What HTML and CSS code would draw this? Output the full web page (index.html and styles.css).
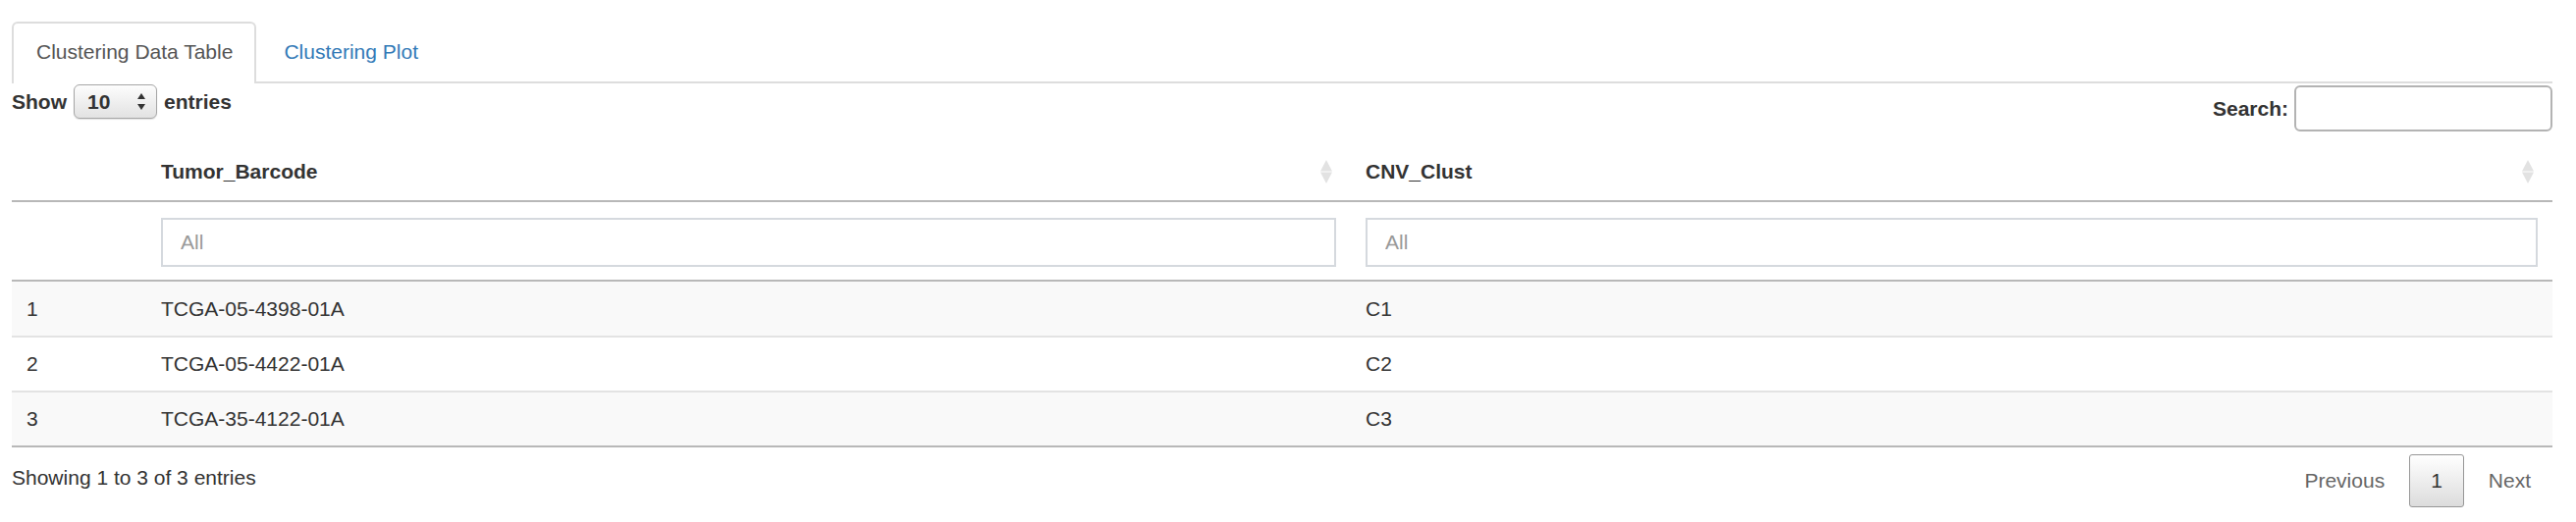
FILE: index.html
```html
<!DOCTYPE html>
<html lang="en">
<head>
<meta charset="utf-8">
<title>Clustering Data Table</title>
<link rel="stylesheet" href="styles.css">
</head>
<body>
<div class="page">
  <ul class="tabs">
    <li class="tab active">Clustering Data Table</li>
    <li class="tab">Clustering Plot</li>
  </ul>

  <div class="controls">
    <label class="length">Show
      <span class="select">10
        <svg class="select-arrows" width="8" height="18" viewBox="0 0 8 18"><polygon points="4,0 8,6 0,6" fill="#333"/><polygon points="0,11 8,11 4,17" fill="#333"/></svg>
      </span>
      entries</label>
    <label class="filter">Search:<input class="search" type="text"></label>
  </div>

  <table class="dt">
    <colgroup><col class="c0"><col class="c1"><col class="c2"></colgroup>
    <thead>
      <tr class="head">
        <th></th>
        <th><div class="th-inner"><span>Tumor_Barcode</span><svg class="sort" width="12" height="24" viewBox="0 0 12 24"><polygon points="6,0 12,11.6 0,11.6" fill="#e2e2e2"/><polygon points="0,12.4 12,12.4 6,24" fill="#e2e2e2"/></svg></div></th>
        <th><div class="th-inner"><span>CNV_Clust</span><svg class="sort" width="12" height="24" viewBox="0 0 12 24"><polygon points="6,0 12,11.6 0,11.6" fill="#e2e2e2"/><polygon points="0,12.4 12,12.4 6,24" fill="#e2e2e2"/></svg></div></th>
      </tr>
      <tr class="filters">
        <td></td>
        <td><input type="text" placeholder="All"></td>
        <td><input type="text" placeholder="All"></td>
      </tr>
    </thead>
    <tbody>
      <tr class="odd"><td>1</td><td>TCGA-05-4398-01A</td><td>C1</td></tr>
      <tr class="even"><td>2</td><td>TCGA-05-4422-01A</td><td>C2</td></tr>
      <tr class="odd"><td>3</td><td>TCGA-35-4122-01A</td><td>C3</td></tr>
    </tbody>
  </table>

  <div class="footer">
    <div class="info">Showing 1 to 3 of 3 entries</div>
    <div class="paginate">
      <span class="pg disabled">Previous</span>
      <span class="pg current">1</span>
      <span class="pg disabled">Next</span>
    </div>
  </div>
</div>
</body>
</html>
```
FILE: styles.css
```css
* { box-sizing: border-box; }

body {
  margin: 0;
  font-family: "Liberation Sans", Arial, Helvetica, sans-serif;
  font-size: 21px;
  line-height: 30px;
  color: #333;
  background: #fff;
}

.page {
  padding: 22px 24px 0 12px;
}

/* tabs */
.tabs {
  display: flex;
  list-style: none;
  margin: 0;
  padding: 0;
  border-bottom: 2px solid #ddd;
}
.tab {
  margin-right: 3px;
  margin-bottom: -2px;
  padding: 14px 22px 17px 23px;
  border: 2px solid transparent;
  border-bottom: 0;
  border-radius: 6px 6px 0 0;
  color: #337ab7;
}
.tab.active {
  color: #555;
  background: #fff;
  border-color: #ddd;
}

/* length + search */
.controls {
  display: flex;
  justify-content: space-between;
  align-items: flex-start;
  height: 60px;
}
.length {
  display: flex;
  align-items: center;
  gap: 7px;
  font-weight: bold;
  margin-top: 1px;
}
.select {
  width: 85px;
  height: 35px;
  display: flex;
  align-items: center;
  justify-content: space-between;
  padding: 0 11px 0 13px;
  border: 1px solid #a6a6a6;
  border-radius: 6px;
  background: linear-gradient(#fdfdfd, #e2e2e2);
  box-shadow: 0 1px 1px rgba(0, 0, 0, 0.12);
}
.filter {
  display: flex;
  align-items: center;
  font-weight: bold;
  margin-top: 2px;
}
.search {
  width: 263px;
  height: 47px;
  margin: 0 0 0 6px;
  padding: 7px;
  border: 2px solid #b3b3b3;
  border-radius: 6px;
  font: inherit;
  background: #fff;
  outline: none;
}

/* table */
.dt {
  width: 100%;
  border-collapse: separate;
  border-spacing: 0;
  table-layout: fixed;
}
.c0 { width: 137px; }
.c1 { width: 1227px; }

.dt th {
  text-align: left;
  font-weight: bold;
  padding: 15px 19px 14px 15px;
  border-bottom: 2px solid #b8b8b8;
}
.th-inner {
  display: flex;
  justify-content: space-between;
  align-items: center;
}
.sort { display: block; }

.filters td {
  padding: 16px 15px 13px;
  border-bottom: 2px solid #b8b8b8;
}
.filters input {
  display: block;
  width: 100%;
  height: 50px;
  margin: 0;
  padding: 0 18px;
  border: 2px solid #d5d9de;
  border-radius: 0;
  font: inherit;
  color: #333;
  background: #fff;
  outline: none;
}
.filters input::placeholder { color: #999; }

.dt tbody td {
  padding: 12px 15px;
  border-top: 2px solid #e3e3e3;
}
.dt tbody tr:first-child td {
  border-top: 0;
  padding-top: 13px;
}
.dt tbody tr:last-child td {
  border-bottom: 2px solid #b8b8b8;
}
.dt tr.odd td { background: #f9f9f9; }

/* footer */
.footer {
  display: flex;
  justify-content: space-between;
  align-items: flex-start;
}
.info { padding-top: 16px; }
.paginate {
  display: flex;
  margin-top: 7px;
}
.pg {
  padding: 11px 21px;
  margin-left: 3px;
  border: 1px solid transparent;
  border-radius: 3px;
  color: #666;
}
.pg.current {
  color: #333;
  border-color: #979797;
  background: linear-gradient(#fff, #dcdcdc);
}
```
